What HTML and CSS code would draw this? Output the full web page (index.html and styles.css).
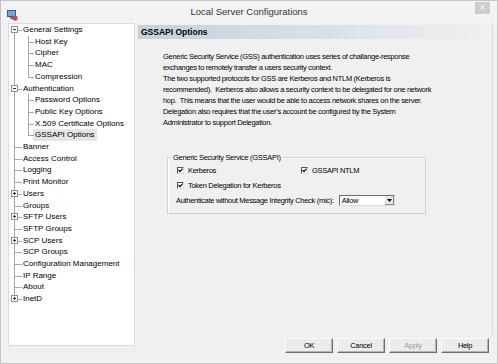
FILE: index.html
```html
<!DOCTYPE html>
<html lang="en">

<head>
    <meta charset="UTF-8">
    <title>Local Server Configurations</title>
    <link rel="stylesheet" href="styles.css">
</head>

<body>
    <div class="window">
        <div class="titlebar">
            <div class="app-icon">
                <svg width="11" height="11" viewBox="0 0 11 11">
                    <rect x="0.5" y="0.5" width="8" height="6" fill="#6fa8dc" stroke="#2f5f9a"/>
                    <rect x="3" y="7" width="3" height="2" fill="#5a7fa8"/>
                    <circle cx="8" cy="8" r="2.6" fill="#d9423b"/>
                </svg>
            </div>
            <div class="title">Local Server Configurations</div>
            <div class="controls"><span class="close">&times;</span></div>
        </div>

        <div class="main">
            <div class="tree">
                <ul class="nodes">
                    <li><span class="exp minus"></span>General Settings
                        <ul>
                            <li>Host Key</li>
                            <li>Cipher</li>
                            <li>MAC</li>
                            <li>Compression</li>
                        </ul>
                    </li>
                    <li><span class="exp minus"></span>Authentication
                        <ul>
                            <li>Password Options</li>
                            <li>Public Key Options</li>
                            <li>X.509 Certificate Options</li>
                            <li><span class="sel">GSSAPI Options</span></li>
                        </ul>
                    </li>
                    <li>Banner</li>
                    <li>Access Control</li>
                    <li>Logging</li>
                    <li>Print Monitor</li>
                    <li><span class="exp plus"></span>Users</li>
                    <li>Groups</li>
                    <li><span class="exp plus"></span>SFTP Users</li>
                    <li>SFTP Groups</li>
                    <li><span class="exp plus"></span>SCP Users</li>
                    <li>SCP Groups</li>
                    <li>Configuration Management</li>
                    <li>IP Range</li>
                    <li>About</li>
                    <li><span class="exp plus"></span>InetD</li>
                </ul>
            </div>

            <div class="side">
                <div class="panel">
                    <div class="panel-head">GSSAPI Options</div>
                    <div class="intro">
                        <p>Generic Security Service (GSS) authentication uses series of challange-response<br>exchanges to remotely transfer a users security context.</p>
                        <p>The two supported protocols for GSS are Kerberos and NTLM (Kerberos is<br>recommended).&nbsp; Kerberos also allows a security context to be delegated for one network<br>hop.&nbsp; This means that the user would be able to access network shares on the server.<br>Delegation also requires that the user's account be configured by the System<br>Administrator to support Delegation.</p>
                    </div>

                    <fieldset class="group">
                        <legend>Generic Security Service (GSSAPI)</legend>
                        <div class="opt-row">
                            <label class="opt"><span class="check"><svg width="5" height="5" viewBox="0 0 5 5"><path d="M0.5 2 L2 3.6 L4.6 0.6" fill="none" stroke="#000" stroke-width="1.2"/></svg></span>Kerberos</label>
                            <label class="opt"><span class="check"><svg width="5" height="5" viewBox="0 0 5 5"><path d="M0.5 2 L2 3.6 L4.6 0.6" fill="none" stroke="#000" stroke-width="1.2"/></svg></span>GSSAPI NTLM</label>
                        </div>
                        <div class="opt-row">
                            <label class="opt"><span class="check"><svg width="5" height="5" viewBox="0 0 5 5"><path d="M0.5 2 L2 3.6 L4.6 0.6" fill="none" stroke="#000" stroke-width="1.2"/></svg></span>Token Delegation for Kerberos</label>
                        </div>
                        <div class="mic-row">
                            <span>Authenticate without Message Integrity Check (mic):</span>
                            <div class="combo">
                                <span class="combo-value">Allow</span>
                                <span class="combo-btn"><svg width="5" height="3" viewBox="0 0 5 3"><path d="M0 0 H5 L2.5 3 Z" fill="#000"/></svg></span>
                            </div>
                        </div>
                    </fieldset>
                </div>

                <div class="buttons">
                    <button class="btn">OK</button>
                    <button class="btn">Cancel</button>
                    <button class="btn" disabled>Apply</button>
                    <button class="btn">Help</button>
                </div>
            </div>
        </div>
    </div>
</body>

</html>
```

FILE: styles.css
```css
body {
    margin: 0;
    padding: 0;
    background-color: #fff;
    font-family: 'Liberation Sans', sans-serif;
    color: #000;
}

.window {
    width: 498px;
    height: 364px;
    box-sizing: border-box;
    border: 1px solid #c4c4c4;
    background-color: #f0f0f0;
    display: flex;
    flex-direction: column;
}

/* title bar */

.titlebar {
    height: 22px;
    display: grid;
    grid-template-columns: 1fr auto 1fr;
    align-items: center;
    background-color: #f3f3f3;
}

.app-icon {
    padding-left: 6px;
    height: 11px;
}

.title {
    font-size: 9.5px;
    color: #333;
    padding-bottom: 2px;
}

.controls {
    display: flex;
    justify-content: flex-end;
    align-self: start;
    padding: 1px 7px 0 0;
}

.close {
    width: 15px;
    height: 12px;
    background-color: #cdcdcd;
    color: #fff;
    font-size: 10px;
    line-height: 12px;
    text-align: center;
}

/* main area */

.main {
    flex: 1;
    display: flex;
    padding: 0 4px 0 7px;
}

.tree {
    width: 127px;
    height: 323px;
    box-sizing: border-box;
    background-color: #fff;
    border: 1px solid #dcdcdc;
    font-size: 8px;
}

.tree ul {
    list-style: none;
    margin: 0;
    padding: 0;
}

.tree li {
    position: relative;
    padding-left: 14px;
    line-height: 11.7px;
    white-space: nowrap;
}

.tree li::before {
    content: "";
    position: absolute;
    left: 5px;
    top: 6px;
    width: 8px;
    border-top: 1px solid #a8a8a8;
}

.tree li::after {
    content: "";
    position: absolute;
    left: 5px;
    top: 0;
    bottom: 0;
    border-left: 1px solid #a8a8a8;
}

.nodes > li:first-child::after {
    top: 6px;
}

.tree li:last-child::after {
    bottom: auto;
    height: 6px;
}

.tree li li {
    padding-left: 12px;
}

.tree li li::before {
    width: 6px;
}

.exp {
    position: absolute;
    left: 2px;
    top: 2px;
    width: 7px;
    height: 7px;
    box-sizing: border-box;
    border: 1px solid #919191;
    background-color: #fff;
    z-index: 1;
}

.exp::before {
    content: "";
    position: absolute;
    left: 1px;
    top: 2px;
    width: 3px;
    height: 1px;
    background-color: #333;
}

.exp.plus::after {
    content: "";
    position: absolute;
    left: 2px;
    top: 1px;
    width: 1px;
    height: 3px;
    background-color: #333;
}

.sel {
    display: inline-block;
    background-color: #e5e5e5;
    padding: 0 2px;
    margin-left: -2px;
}

/* right side */

.side {
    flex: 1;
    margin-left: 2px;
    display: flex;
    flex-direction: column;
}

.panel {
    height: 312px;
    border-right: 1px solid #dadada;
    font-size: 7.5px;
    letter-spacing: -0.3px;
}

.panel-head {
    margin: 2px 2px 0 1px;
    height: 14px;
    line-height: 14px;
    padding-left: 3px;
    font-size: 8.5px;
    font-weight: bold;
    letter-spacing: 0;
    background: linear-gradient(to right, #c6d1db, #d9e1e8 55%, #eef1f4);
}

.intro {
    margin-top: 12px;
    padding-left: 26px;
    line-height: 11px;
    white-space: nowrap;
}

.intro p {
    margin: 0;
}

.group {
    margin: 24px 0 0 30px;
    width: 244px;
    box-sizing: border-box;
    padding: 2px 0 7px 9px;
    border: 1px solid #d3d3d3;
    box-shadow: inset 1px 1px 0 #fff;
}

.group legend {
    padding: 0 2px;
    margin-left: -6px;
    line-height: 11px;
}

.opt-row {
    display: flex;
    height: 11px;
    margin-bottom: 4px;
}

.opt {
    display: flex;
    align-items: center;
    gap: 4px;
    width: 124px;
    line-height: 11px;
}

.check {
    width: 7px;
    height: 7px;
    box-sizing: border-box;
    border: 1px solid;
    border-color: #555 #e0e0e0 #e0e0e0 #555;
    background-color: #fff;
    display: flex;
    align-items: center;
    justify-content: center;
}

.mic-row {
    display: flex;
    align-items: center;
    gap: 5px;
    margin-left: -1px;
}

.combo {
    width: 56px;
    height: 11px;
    box-sizing: border-box;
    border: 1px solid;
    border-color: #6d6d6d #dcdcdc #dcdcdc #6d6d6d;
    background-color: #fff;
    display: flex;
}

.combo-value {
    flex: 1;
    line-height: 9px;
    padding-left: 2px;
}

.combo-btn {
    width: 9px;
    background-color: #e6e6e6;
    border-left: 1px solid #fff;
    box-shadow: inset -1px -1px 0 #8a8a8a;
    display: flex;
    align-items: center;
    justify-content: center;
}

/* dialog buttons */

.buttons {
    display: flex;
    justify-content: flex-end;
    gap: 4px;
    margin-top: 3px;
    padding-right: 4px;
}

.btn {
    width: 48px;
    height: 15px;
    padding: 0;
    background-color: #ececec;
    border: 1px solid;
    border-color: #fff #6f6f6f #6f6f6f #fff;
    box-shadow: inset -1px -1px 0 #b4b4b4;
    font-family: 'Liberation Sans', sans-serif;
    font-size: 7.5px;
    letter-spacing: -0.3px;
    color: #000;
}

.btn:disabled {
    color: #a0a0a0;
}
```
